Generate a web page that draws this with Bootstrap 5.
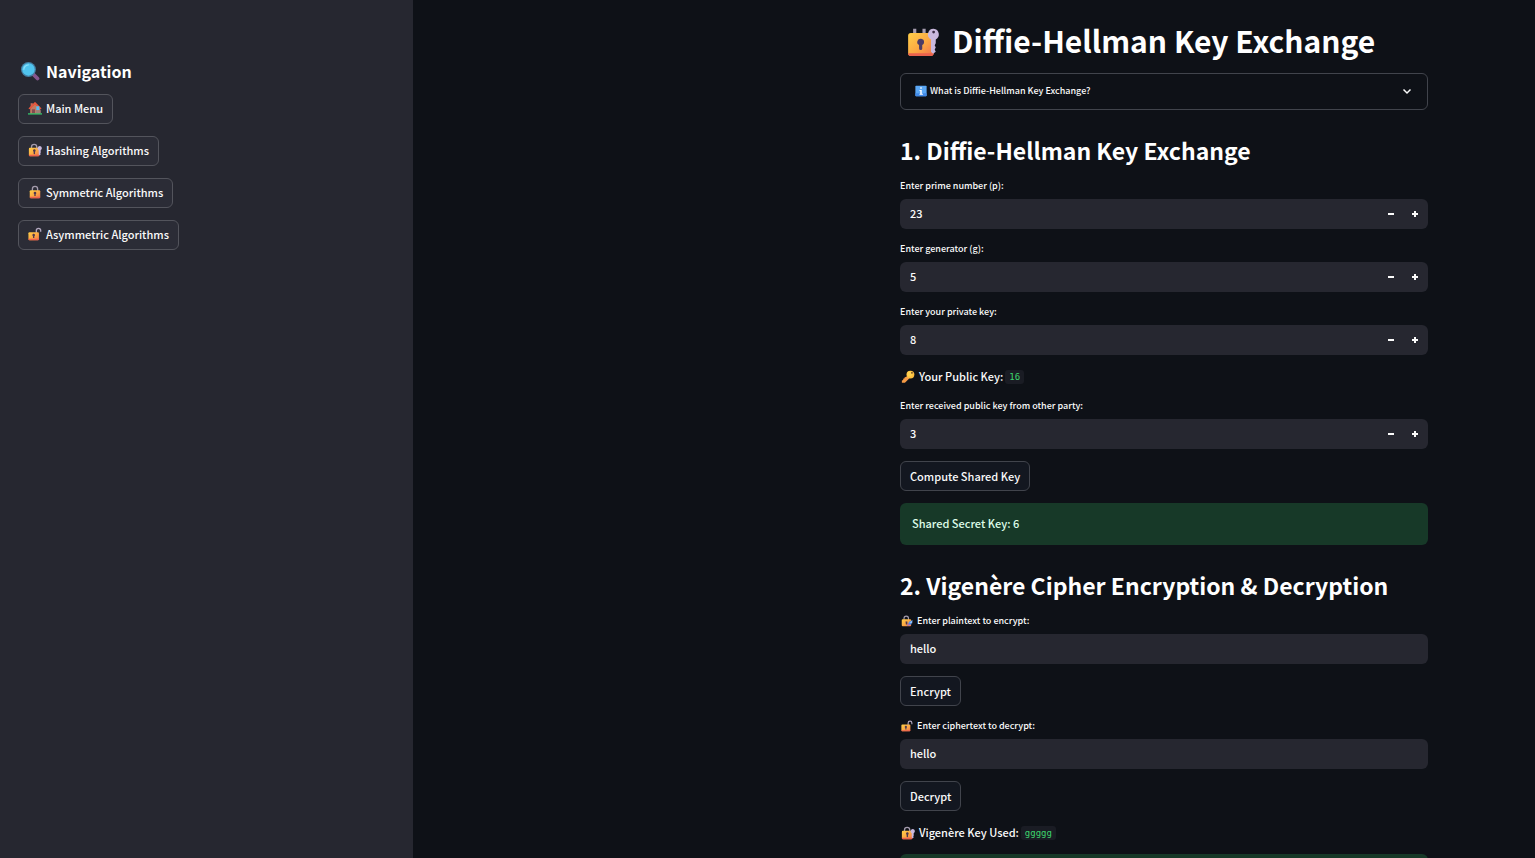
<!DOCTYPE html>
<html lang="en" data-bs-theme="dark">
<head>
<meta charset="utf-8">
<meta name="viewport" content="width=device-width, initial-scale=1">
<title>Diffie-Hellman Key Exchange</title>
<link href="https://cdn.jsdelivr.net/npm/bootstrap@5.3.0/dist/css/bootstrap.min.css" rel="stylesheet">
<style>
  :root { --ink: #fafafa; --page: #0e1117; --panel: #262730; --line: #41444c; }
  body { background: var(--page); color: var(--ink); font: 500 11px/19px "Noto Sans CJK SC", "Noto Sans", sans-serif; }
  .side-panel { width: 413px; background: var(--panel); padding: 60px 18px 18px; }
  .side-panel h2 { font-size: 16px; line-height: 22px; font-weight: 700; padding-left: 2px; gap: 6px; }
  .side-list { gap: 12px; }
  .main-area { padding: 19px 107px 0 24px; }
  .page-column { width: 100%; max-width: 528px; gap: 12px; }
  .page-title { font-size: 30px; line-height: 42px; font-weight: 700; padding-left: 6px; gap: 12px; }
  .section-title { font-size: 23px; line-height: 32px; font-weight: 700; padding-top: 12px; margin: 0; }
  .btn-line { --bs-btn-color: var(--ink); --bs-btn-bg: #131720; --bs-btn-border-color: var(--line);
    --bs-btn-hover-color: #ff4b4b; --bs-btn-hover-border-color: #ff4b4b;
    --bs-btn-font-size: 11px; --bs-btn-line-height: 18px; --bs-btn-padding-x: 9px; --bs-btn-padding-y: 5px;
    --bs-btn-border-radius: 6px; --bs-btn-font-weight: 500; }
  .side-panel .btn-line { --bs-btn-bg: #2b2c36; --bs-btn-border-color: #53545c; padding-top: 4px; padding-bottom: 6px; }
  .info-toggle { height: 37px; border: 1px solid var(--line); border-radius: 6px; padding: 0 14px 2px; font-size: 9px; font-weight: 500; background: none; color: var(--ink); line-height: 15px; }
  .info-toggle svg:first-child { margin-right: 3px; }
  .field-label { font-size: 9px; line-height: 15px; margin-bottom: 6px; }
  .field-box { height: 30px; border: 0; border-radius: 6px; background: var(--panel); overflow: hidden; padding-right: 1px; }
  .field-box .form-control { border: 0; background: none; box-shadow: none; color: var(--ink); font-size: 11px; font-weight: 500; line-height: 18px; padding: 5px 10px 7px; min-height: 0; appearance: textfield; }
  .field-box input::-webkit-inner-spin-button { display: none; }
  .step-btn { width: 24px; height: 30px; flex-shrink: 0; border: 0; background: none; color: var(--ink); }
  .alert-ok { background: #173928; color: #dffde9; border-radius: 6px; padding: 10px 12px 12px; line-height: 20px; }
  code { font: 9px/14px "DejaVu Sans Mono", monospace; color: #3dd56d; background: #1a1c24; border-radius: 3px; padding: 0 4px; margin-left: 2px; }
  .glyph-xl { width: 34px; height: 34px; }
  .glyph-lg { width: 20px; height: 20px; }
  .glyph-md { width: 14px; height: 14px; }
  .glyph-sm { width: 12px; height: 12px; }
  .text-glyph { margin: 0 4px 0 1px; }
</style>
</head>
<body>
<svg class="position-absolute" width="0" height="0" aria-hidden="true">
  <defs>
    <linearGradient id="gold" x1="0" y1="0" x2="1" y2="1"><stop stop-color="#ffcf48"/><stop offset=".55" stop-color="#fba743"/><stop offset="1" stop-color="#f0704f"/></linearGradient>
    <symbol id="lock-key-large" viewBox="0 0 32 32">
      <path d="M8.200 5.500V12M17 5.500V12" stroke="#a49bad" stroke-width="3"/>
      <rect x="2" y="9.500" width="24" height="21.500" rx="2.500" fill="url(#gold)"/><path d="M2 28.500h24a2.500 2.500 0 0 1-2.500 2.500h-19A2.500 2.500 0 0 1 2 28.500z" fill="#ea624d"/>
      <path d="M17 18a3.200 3.200 0 1 0-4.700 2.800V24a1.500 1.500 0 0 0 3 0v-3.200A3.200 3.200 0 0 0 17 18z" fill="#4b3b66"/>
      <path d="M26 5.500a5.300 5.300 0 0 0-2.500 10V27l2 2 2.500-2-1-2 1-2-1-2 1-2v-3.500a5.300 5.300 0 0 0-2-10z" fill="#c9b8dd"/><circle cx="26" cy="8.500" r="1.300" fill="#3b2b44"/>
    </symbol>
    <symbol id="lock-key" viewBox="0 0 32 32">
      <path d="M8 14V9a6 6 0 0 1 12 0v5" fill="none" stroke="#a49bad" stroke-width="3"/>
      <rect x="2" y="11" width="24" height="19" rx="2.500" fill="url(#gold)"/><path d="M2 27h24v1a2 2 0 0 1-2 2H4a2 2 0 0 1-2-2z" fill="#ea624d"/>
      <path d="M17.500 17.500a3 3 0 1 0-4.600 2.400V24a1.600 1.600 0 0 0 3.200 0v-4.100a3 3 0 0 0 1.400-2.400z" fill="#4b3650"/>
      <path d="M27 7a5 5 0 0 0-2.500 9.400V26l2 2 2.500-2-1-2 1-2v-5.600A5 5 0 0 0 27 7z" fill="#c9b8dd"/>
    </symbol>
    <symbol id="lock-closed" viewBox="0 0 32 32">
      <path d="M10 15V9a6 6 0 0 1 12 0v6" fill="none" stroke="#a49bad" stroke-width="3"/>
      <rect x="4" y="12" width="24" height="18" rx="2.500" fill="url(#gold)"/><path d="M4 27h24v1a2 2 0 0 1-2 2H6a2 2 0 0 1-2-2z" fill="#ea624d"/>
      <path d="M19 18.500a3 3 0 1 0-4.500 2.500v4h3v-4a3 3 0 0 0 1.500-2.500z" fill="#4b3650"/>
    </symbol>
    <symbol id="lock-open" viewBox="0 0 32 32">
      <path d="M19 14V8a5 5 0 0 1 10 0v3" fill="none" stroke="#b3a8bf" stroke-width="3"/>
      <rect x="1" y="12" width="24" height="18" rx="2.500" fill="url(#gold)"/><path d="M1 27h24v1a2 2 0 0 1-2 2H3a2 2 0 0 1-2-2z" fill="#ea624d"/>
      <path d="M16 18.500a3 3 0 1 0-4.500 2.500v4h3v-4a3 3 0 0 0 1.500-2.500z" fill="#4b3650"/>
    </symbol>
    <symbol id="lock-pen" viewBox="0 0 32 32">
      <path d="M8 15V9a6 6 0 0 1 12 0v6" fill="none" stroke="#a49bad" stroke-width="3"/>
      <rect x="2" y="11" width="25" height="19" rx="2.500" fill="url(#gold)"/><path d="M12 17h5v8h-4z" fill="#4b3650"/>
      <path d="M31 14l-9 3-6 12 11-4z" fill="#4d8fe8"/><path d="M22 21l8-7v8z" fill="#8fc2ff"/><path d="M21 22l-5 7 7-4z" fill="#d45c9b"/>
    </symbol>
    <symbol id="key" viewBox="0 0 32 32">
      <path d="M17 13l4 4L9 29H2v-5l3-1v-3l3-1v-2z" fill="#f59a45"/><circle cx="21.500" cy="10.500" r="9" fill="#fdbf3f"/><circle cx="20" cy="9" r="6" fill="#ffd04e"/><circle cx="25" cy="6.500" r="2.200" fill="#6e4a2a"/>
    </symbol>
    <symbol id="house" viewBox="0 0 32 32">
      <path d="M6 5h5v9H6z" fill="#c76b59"/><path d="M5 17L16 6l12 11v12H5z" fill="#c27b63"/><path d="M1 17L15 3q1-1 2 0l14 14-3 2L16 8 4 19z" fill="#e8573d"/>
      <path d="M9 19h7v10H9z" fill="#824c50"/><path d="M19 12h7v9h-7z" fill="#55bff5"/><path d="M18 21h11v7H18z" fill="#9b7f78"/><path d="M0 28h32v3H0z" fill="#35c56b"/>
    </symbol>
    <symbol id="magnifier" viewBox="0 0 32 32">
      <path d="M20 20l8 8" stroke="#86568e" stroke-width="6" stroke-linecap="round"/><circle cx="13.500" cy="13.500" r="12" fill="#457fa3"/><circle cx="13.500" cy="13.500" r="10" fill="#50c4ee"/><path d="M6 14a8 8 0 0 1 8-8" stroke="#8be0fa" stroke-width="2" fill="none"/>
    </symbol>
    <symbol id="info" viewBox="0 0 32 32">
      <rect x="1" y="2" width="30" height="28" rx="2" fill="#5aa7f5"/><path d="M1 22h30v6a2 2 0 0 1-2 2H3a2 2 0 0 1-2-2z" fill="#4189e6"/><path d="M14 6h4v4h-4zM12 13h6v10h3v3h-9v-3h2v-7h-2z" fill="#fff"/>
    </symbol>
    <symbol id="minus" viewBox="0 0 8 8"><path d="M1 4h6" stroke="currentColor" stroke-width="2"/></symbol>
    <symbol id="plus" viewBox="0 0 8 8"><path d="M1 4h6M4 1v6" stroke="currentColor" stroke-width="2"/></symbol>
  </defs>
</svg>

<div class="d-flex vh-100 overflow-hidden">
  <nav class="side-panel flex-shrink-0" aria-label="Navigation">
    <h2 class="d-flex align-items-center mb-2 pb-1"><svg class="glyph-lg"><use href="#magnifier"/></svg>Navigation</h2>
    <div class="side-list d-flex flex-column align-items-start">
      <button type="button" class="btn btn-line d-flex align-items-center gap-1"><svg class="glyph-md"><use href="#house"/></svg>Main Menu</button>
      <button type="button" class="btn btn-line d-flex align-items-center gap-1"><svg class="glyph-md"><use href="#lock-key"/></svg>Hashing Algorithms</button>
      <button type="button" class="btn btn-line d-flex align-items-center gap-1"><svg class="glyph-md"><use href="#lock-closed"/></svg>Symmetric Algorithms</button>
      <button type="button" class="btn btn-line d-flex align-items-center gap-1"><svg class="glyph-md"><use href="#lock-open"/></svg>Asymmetric Algorithms</button>
    </div>
  </nav>

  <main class="main-area flex-grow-1 d-flex justify-content-end">
    <div class="page-column d-flex flex-column">
      <h1 class="page-title d-flex align-items-center m-0"><svg class="glyph-xl flex-shrink-0"><use href="#lock-key-large"/></svg>Diffie-Hellman Key Exchange</h1>

      <button type="button" class="info-toggle d-flex align-items-center flex-shrink-0" aria-expanded="false">
        <svg class="glyph-sm"><use href="#info"/></svg>What is Diffie-Hellman Key Exchange?
        <svg class="glyph-sm ms-auto" viewBox="0 0 12 12"><path d="M2.500 4.500L6 8l3.500-3.500" fill="none" stroke="currentColor" stroke-width="1.500"/></svg>
      </button>

      <h2 class="section-title">1. Diffie-Hellman Key Exchange</h2>

      <div>
        <label class="field-label d-block" for="prime">Enter prime number (p):</label>
        <div class="field-box d-flex"><input class="form-control" id="prime" type="number" value="23"><button class="step-btn p-0" type="button" aria-label="Decrease prime"><svg width="8" height="8" class="d-block m-auto"><use href="#minus"/></svg></button><button class="step-btn p-0" type="button" aria-label="Increase prime"><svg width="8" height="8" class="d-block m-auto"><use href="#plus"/></svg></button></div>
      </div>
      <div>
        <label class="field-label d-block" for="generator">Enter generator (g):</label>
        <div class="field-box d-flex"><input class="form-control" id="generator" type="number" value="5"><button class="step-btn p-0" type="button" aria-label="Decrease generator"><svg width="8" height="8" class="d-block m-auto"><use href="#minus"/></svg></button><button class="step-btn p-0" type="button" aria-label="Increase generator"><svg width="8" height="8" class="d-block m-auto"><use href="#plus"/></svg></button></div>
      </div>
      <div>
        <label class="field-label d-block" for="private">Enter your private key:</label>
        <div class="field-box d-flex"><input class="form-control" id="private" type="number" value="8"><button class="step-btn p-0" type="button" aria-label="Decrease private key"><svg width="8" height="8" class="d-block m-auto"><use href="#minus"/></svg></button><button class="step-btn p-0" type="button" aria-label="Increase private key"><svg width="8" height="8" class="d-block m-auto"><use href="#plus"/></svg></button></div>
      </div>

      <p class="d-flex align-items-center m-0"><svg class="glyph-md text-glyph"><use href="#key"/></svg>Your Public Key:<code>16</code></p>

      <div>
        <label class="field-label d-block" for="received">Enter received public key from other party:</label>
        <div class="field-box d-flex"><input class="form-control" id="received" type="number" value="3"><button class="step-btn p-0" type="button" aria-label="Decrease received key"><svg width="8" height="8" class="d-block m-auto"><use href="#minus"/></svg></button><button class="step-btn p-0" type="button" aria-label="Increase received key"><svg width="8" height="8" class="d-block m-auto"><use href="#plus"/></svg></button></div>
      </div>

      <button type="button" class="btn btn-line align-self-start">Compute Shared Key</button>
      <div class="alert-ok" role="status">Shared Secret Key: 6</div>

      <h2 class="section-title">2. Vigenère Cipher Encryption &amp; Decryption</h2>

      <div>
        <label class="field-label d-flex align-items-center" for="plain"><svg class="glyph-sm text-glyph"><use href="#lock-pen"/></svg>Enter plaintext to encrypt:</label>
        <div class="field-box"><input class="form-control" id="plain" type="text" value="hello"></div>
      </div>
      <button type="button" class="btn btn-line align-self-start">Encrypt</button>
      <div>
        <label class="field-label d-flex align-items-center" for="cipher"><svg class="glyph-sm text-glyph"><use href="#lock-open"/></svg>Enter ciphertext to decrypt:</label>
        <div class="field-box"><input class="form-control" id="cipher" type="text" value="hello"></div>
      </div>
      <button type="button" class="btn btn-line align-self-start">Decrypt</button>

      <p class="d-flex align-items-center m-0"><svg class="glyph-md text-glyph"><use href="#lock-key"/></svg>Vigenère Key Used:<code>ggggg</code></p>
      <div class="alert-ok" role="status">&nbsp;</div>
    </div>
  </main>
</div>
<script src="https://cdn.jsdelivr.net/npm/bootstrap@5.3.0/dist/js/bootstrap.bundle.min.js"></script>
</body>
</html>
